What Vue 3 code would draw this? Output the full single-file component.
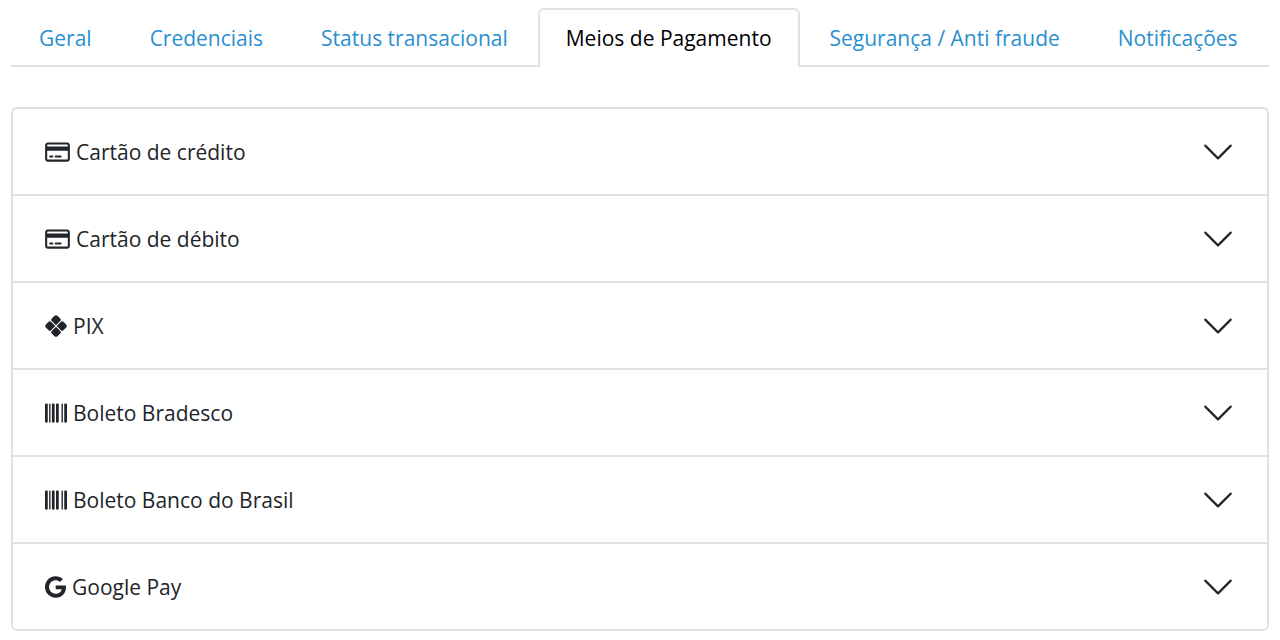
<script setup>
import { ref } from 'vue'

const tabs = [
  'Geral',
  'Credenciais',
  'Status transacional',
  'Meios de Pagamento',
  'Segurança / Anti fraude',
  'Notificações',
]
const activeTab = ref('Meios de Pagamento')

const icons = {
  card: {
    viewBox: '0 0 576 512',
    d: 'M512 80c8.8 0 16 7.2 16 16v32H48V96c0-8.8 7.2-16 16-16H512zm16 144V416c0 8.8-7.2 16-16 16H64c-8.8 0-16-7.2-16-16V224H528zM64 32C28.7 32 0 60.7 0 96V416c0 35.3 28.7 64 64 64H512c35.3 0 64-28.7 64-64V96c0-35.3-28.7-64-64-64H64zm56 304c-13.3 0-24 10.7-24 24s10.7 24 24 24h48c13.3 0 24-10.7 24-24s-10.7-24-24-24H120zm128 0c-13.3 0-24 10.7-24 24s10.7 24 24 24H360c13.3 0 24-10.7 24-24s-10.7-24-24-24H248z',
  },
  pix: {
    viewBox: '-8 -8 16 16',
    transform: 'rotate(45)',
    d: 'M-.35-.35V-4.7a1.3 1.3 0 0 0-1.3-1.3H-4.2a1.8 1.8 0 0 0-1.8 1.8v2.55a1.3 1.3 0 0 0 1.3 1.3zM.35-.35V-4.7a1.3 1.3 0 0 1 1.3-1.3H4.2a1.8 1.8 0 0 1 1.8 1.8v2.55a1.3 1.3 0 0 1-1.3 1.3zM.35.35V4.7a1.3 1.3 0 0 0 1.3 1.3H4.2a1.8 1.8 0 0 0 1.8-1.8v-2.55a1.3 1.3 0 0 0-1.3-1.3zM-.35.35V4.7a1.3 1.3 0 0 1-1.3 1.3H-4.2a1.8 1.8 0 0 1-1.8-1.8v-2.55a1.3 1.3 0 0 1 1.3-1.3z',
  },
  barcode: {
    viewBox: '0 0 512 512',
    d: 'M24 32C10.7 32 0 42.7 0 56V456c0 13.3 10.7 24 24 24H40c13.3 0 24-10.7 24-24V56c0-13.3-10.7-24-24-24H24zm88 0c-8.8 0-16 7.2-16 16V464c0 8.8 7.2 16 16 16s16-7.2 16-16V48c0-8.8-7.2-16-16-16zm72 0c-13.3 0-24 10.7-24 24V456c0 13.3 10.7 24 24 24h16c13.3 0 24-10.7 24-24V56c0-13.3-10.7-24-24-24H184zm96 0c-13.3 0-24 10.7-24 24V456c0 13.3 10.7 24 24 24h16c13.3 0 24-10.7 24-24V56c0-13.3-10.7-24-24-24H280zM448 56V456c0 13.3 10.7 24 24 24h16c13.3 0 24-10.7 24-24V56c0-13.3-10.7-24-24-24H472c-13.3 0-24 10.7-24 24zm-64-8V464c0 8.8 7.2 16 16 16s16-7.2 16-16V48c0-8.8-7.2-16-16-16s-16 7.2-16 16z',
  },
  google: {
    viewBox: '0 0 488 512',
    d: 'M488 261.8C488 403.3 391.1 504 248 504 110.8 504 0 393.2 0 256S110.8 8 248 8c66.8 0 123 24.5 166.3 64.9l-67.5 64.9C258.5 52.6 94.3 116.6 94.3 256c0 86.5 69.1 156.6 153.7 156.6 98.2 0 135-70.4 140.8-106.9H248v-85.3h236.1c2.3 12.7 3.9 24.9 3.9 41.4z',
  },
}

const methods = [
  { label: 'Cartão de crédito', icon: 'card' },
  { label: 'Cartão de débito', icon: 'card' },
  { label: 'PIX', icon: 'pix' },
  { label: 'Boleto Bradesco', icon: 'barcode' },
  { label: 'Boleto Banco do Brasil', icon: 'barcode' },
  { label: 'Google Pay', icon: 'google' },
]
</script>

<template>
  <main class="page">
    <div class="tabs" role="tablist">
      <button
        v-for="tab in tabs"
        :key="tab"
        type="button"
        role="tab"
        class="tab"
        :class="{ active: tab === activeTab }"
        :aria-selected="tab === activeTab"
        @click="activeTab = tab"
      >{{ tab }}</button>
    </div>

    <div class="accordion">
      <h2 v-for="m in methods" :key="m.label" class="item">
        <button type="button" class="toggle" aria-expanded="false">
          <svg class="icon" :class="m.icon" :viewBox="icons[m.icon].viewBox" aria-hidden="true">
            <path :d="icons[m.icon].d" :transform="icons[m.icon].transform" />
          </svg>
          <span class="label">{{ m.label }}</span>
          <svg class="chevron" viewBox="0 0 16 16" aria-hidden="true">
            <path d="M1.646 4.646a.5.5 0 0 1 .708 0L8 10.293l5.646-5.647a.5.5 0 0 1 .708.708l-6 6a.5.5 0 0 1-.708 0l-6-6a.5.5 0 0 1 0-.708z" />
          </svg>
        </button>
      </h2>
    </div>
  </main>
</template>

<style>
body {
  background: #fff;
}
</style>

<style scoped>
.page {
  padding: 8px 11px;
  font-family: "Open Sans", "Noto Sans", sans-serif;
  font-size: 21px;
  line-height: 33px;
  color: #212529;
}

button {
  margin: 0;
  background: none;
  font: inherit;
  color: inherit;
  cursor: pointer;
}

.tabs {
  display: flex;
  gap: 2px;
  box-shadow: inset 0 -2px #dee2e6;
}

.tab {
  padding: 12px 26px;
  border: 2px solid transparent;
  border-bottom: 0;
  border-radius: 6px 6px 0 0;
  color: #2a90d0;
  white-space: nowrap;
}

.tab.active {
  border-color: #dee2e6;
  background: #fff;
  color: #000;
}

.accordion {
  margin-top: 40px;
  border: 2px solid #dee2e6;
  border-radius: 6px;
}

.item {
  margin: 0;
  font: inherit;
}

.item + .item {
  border-top: 2px solid #dee2e6;
}

.toggle {
  display: flex;
  align-items: center;
  gap: 6px;
  width: 100%;
  padding: 26px 32px 25px;
  border: 0;
  text-align: left;
}

.icon {
  flex: none;
  width: 22px;
  height: 22px;
  fill: currentColor;
}

.icon.card {
  width: 25px;
}

.icon.google {
  width: 21px;
}

.label {
  flex: 1;
}

.chevron {
  flex: none;
  width: 34px;
  height: 34px;
  fill: currentColor;
}
</style>
